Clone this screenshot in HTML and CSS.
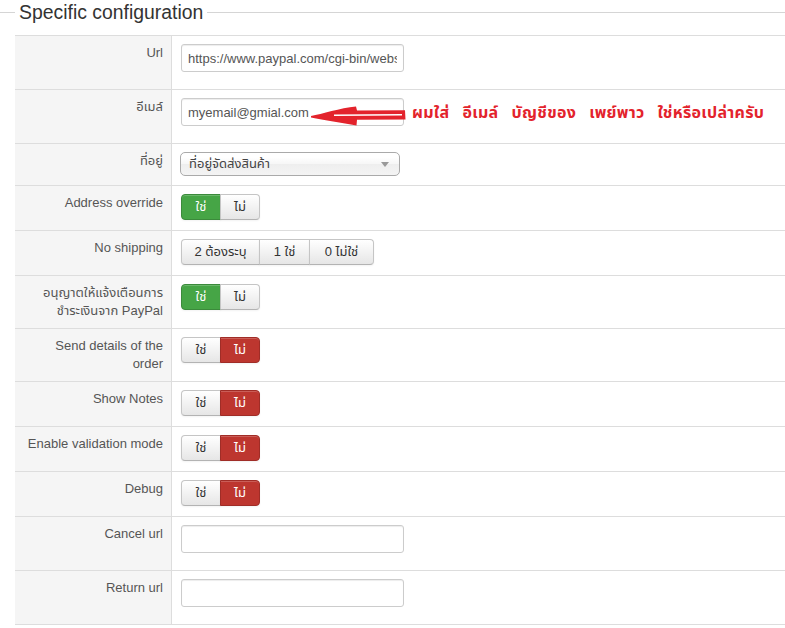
FILE: index.html
```html
<!DOCTYPE html>
<html>
<head>
<meta charset="utf-8">
<link rel="stylesheet" href="styles.css">
</head>
<body>
<div class="page">
  <div class="legend"><span class="legend-line short"></span><span class="legend-text">Specific configuration</span><span class="legend-line long"></span></div>
  <div class="form">
    <div class="row">
      <div class="label">Url</div>
      <div class="ctrl"><input class="input" type="text" value="https://www.paypal.com/cgi-bin/webscr"></div>
    </div>
    <div class="row">
      <div class="label">อีเมล์</div>
      <div class="ctrl annotated">
        <input class="input" type="text" value="myemail@gmial.com">
        <svg class="arrow" width="100" height="24" viewBox="0 0 100 24">
          <path d="M1 10 C12 8 30 2 46 0.5 L47 4.5 L95 4.2 L95.5 13.5 L47 13.8 L46.5 19.5 C32 17 14 14 1 11.5 Z" fill="#e3232c"/>
          <path d="M24 9.2 L92 8.8" stroke="#ffffff" stroke-width="1.6" fill="none"/>
        </svg>
        <div class="note"><span>ผมใส่</span><span>อีเมล์</span><span>บัญชีของ</span><span>เพย์พาว</span><span>ใช่หรือเปล่าครับ</span></div>
      </div>
    </div>
    <div class="row">
      <div class="label">ที่อยู่</div>
      <div class="ctrl"><div class="select"><span>ที่อยู่จัดส่งสินค้า</span><span class="caret"></span></div></div>
    </div>
    <div class="row">
      <div class="label">Address override</div>
      <div class="ctrl"><div class="btn-group"><span class="btn yn success">ใช่</span><span class="btn yn">ไม่</span></div></div>
    </div>
    <div class="row">
      <div class="label">No shipping</div>
      <div class="ctrl"><div class="btn-group"><span class="btn w79">2 ต้องระบุ</span><span class="btn w51">1 ใช่</span><span class="btn w65">0 ไม่ใช่</span></div></div>
    </div>
    <div class="row">
      <div class="label">อนุญาตให้แจ้งเตือนการ<br>ชำระเงินจาก PayPal</div>
      <div class="ctrl"><div class="btn-group"><span class="btn yn success">ใช่</span><span class="btn yn">ไม่</span></div></div>
    </div>
    <div class="row">
      <div class="label">Send details of the<br>order</div>
      <div class="ctrl"><div class="btn-group"><span class="btn yn">ใช่</span><span class="btn yn danger">ไม่</span></div></div>
    </div>
    <div class="row">
      <div class="label">Show Notes</div>
      <div class="ctrl"><div class="btn-group"><span class="btn yn">ใช่</span><span class="btn yn danger">ไม่</span></div></div>
    </div>
    <div class="row">
      <div class="label">Enable validation mode</div>
      <div class="ctrl"><div class="btn-group"><span class="btn yn">ใช่</span><span class="btn yn danger">ไม่</span></div></div>
    </div>
    <div class="row">
      <div class="label">Debug</div>
      <div class="ctrl"><div class="btn-group"><span class="btn yn">ใช่</span><span class="btn yn danger">ไม่</span></div></div>
    </div>
    <div class="row">
      <div class="label">Cancel url</div>
      <div class="ctrl"><input class="input" type="text" value=""></div>
    </div>
    <div class="row">
      <div class="label">Return url</div>
      <div class="ctrl"><input class="input" type="text" value=""></div>
    </div>
  </div>
</div>
</body>
</html>
```
FILE: styles.css
```css
html, body {
  margin: 0;
  padding: 0;
  background: #ffffff;
}
body {
  font-family: "Liberation Sans", Tahoma, "Noto Sans Thai", "Noto Sans Thai UI", sans-serif;
  font-size: 13px;
  line-height: 18px;
  color: #333333;
}
.page {
  width: 785px;
  overflow: hidden;
}
.legend {
  display: flex;
  align-items: center;
  height: 24px;
  margin-bottom: 11px;
}
.legend-line {
  height: 1px;
  background: #d5d5d5;
}
.legend-line.short {
  width: 15px;
}
.legend-line.long {
  flex: 1;
}
.legend-text {
  font-size: 19.4px;
  line-height: 24px;
  color: #333333;
  padding: 0 4px;
}
.form {
  margin-left: 15px;
  border-bottom: 1px solid #dddddd;
}
.row {
  display: flex;
  border-top: 1px solid #dddddd;
}
.label {
  width: 148px;
  flex: none;
  padding: 8px 8px 8px 0;
  text-align: right;
  background: #f5f5f5;
  border-right: 1px solid #dddddd;
  color: #555555;
}
.ctrl {
  flex: 1;
  padding: 8px 9px 8px;
  position: relative;
}
.input {
  display: block;
  box-sizing: border-box;
  width: 223px;
  height: 28px;
  margin: 0 0 9px 0;
  padding: 4px 6px;
  border: 1px solid #cccccc;
  border-radius: 3px;
  box-shadow: inset 0 1px 1px rgba(0,0,0,0.075);
  font-family: "Liberation Sans", Tahoma, sans-serif;
  font-size: 13px;
  line-height: 18px;
  color: #555555;
  background: #ffffff;
  outline: none;
}
.select {
  box-sizing: border-box;
  width: 220px;
  height: 24px;
  margin-left: -1px;
  margin-bottom: 1px;
  border: 1px solid #aaaaaa;
  border-radius: 5px;
  background: linear-gradient(#ffffff 20%, #f6f6f6 50%, #eeeeee 52%, #f4f4f4 100%);
  padding: 2px 8px;
  display: flex;
  justify-content: space-between;
  align-items: center;
  color: #444444;
}
.caret {
  width: 0;
  height: 0;
  border-left: 4px solid transparent;
  border-right: 4px solid transparent;
  border-top: 5px solid #999999;
  margin-right: 2px;
}
.btn-group {
  display: flex;
  margin-bottom: 2px;
}
.btn {
  box-sizing: border-box;
  height: 26px;
  padding: 3px 0;
  border: 1px solid #c5c5c5;
  border-bottom-color: #b3b3b3;
  background: linear-gradient(#ffffff, #e6e6e6);
  color: #333333;
  text-align: center;
  box-shadow: inset 0 1px 0 rgba(255,255,255,0.2), 0 1px 2px rgba(0,0,0,0.05);
}
.btn + .btn {
  margin-left: -1px;
}
.btn:first-child {
  border-radius: 4px 0 0 4px;
}
.btn:last-child {
  border-radius: 0 4px 4px 0;
}
.btn.yn {
  width: 40px;
}
.btn.w79 {
  width: 79px;
}
.btn.w51 {
  width: 51px;
}
.btn.w65 {
  width: 65px;
}
.btn.success {
  background: #46a546;
  border-color: #3b8a3b;
  color: #ffffff;
}
.btn.danger {
  background: #bd362f;
  border-color: #a02d27;
  color: #ffffff;
}
.annotated {
  display: flex;
}
.arrow {
  position: absolute;
  left: 138px;
  top: 16px;
}
.note {
  display: flex;
  gap: 13px;
  margin-left: 8px;
  margin-top: 6px;
  font-weight: bold;
  font-size: 16px;
  letter-spacing: 0.3px;
  color: #e3232c;
  white-space: nowrap;
}
```
